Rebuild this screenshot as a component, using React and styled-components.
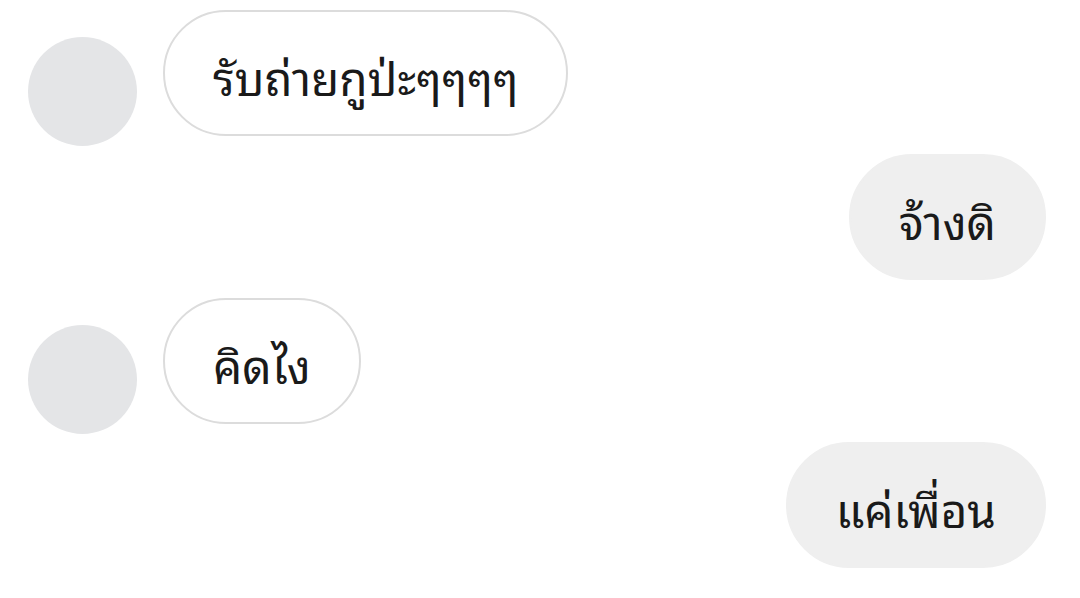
import styled, { createGlobalStyle } from 'styled-components';

const GlobalStyle = createGlobalStyle`
  html, body {
    margin: 0;
    padding: 0;
    background: #fff;
  }
  body {
    font-family: "Noto Sans Thai Looped", "Noto Sans Thai", "Noto Sans", sans-serif;
    color: #1a1a1a;
  }
`;

const messages = [
  { id: 1, from: 'them', text: 'รับถ่ายกูป่ะๆๆๆๆ' },
  { id: 2, from: 'me', text: 'จ้างดิ' },
  { id: 3, from: 'them', text: 'คิดไง' },
  { id: 4, from: 'me', text: 'แค่เพื่อน' },
];

const Thread = styled.main`
  width: 1080px;
  height: 598px;
  box-sizing: border-box;
  padding: 10px 34px 0 28px;
  display: flex;
  flex-direction: column;
  gap: 18px;
  overflow: hidden;
`;

const Row = styled.div`
  display: flex;
  align-items: flex-end;
  justify-content: ${(p) => (p.$mine ? 'flex-end' : 'flex-start')};
`;

const Avatar = styled.div`
  width: 109px;
  height: 109px;
  flex-shrink: 0;
  border-radius: 50%;
  background: #e4e5e7;
  margin-right: 26px;
  margin-bottom: -10px;
`;

const Bubble = styled.div`
  box-sizing: border-box;
  height: 126px;
  display: flex;
  align-items: center;
  padding: 4px 48px 0;
  border-radius: 63px;
  font-size: 46px;
  font-weight: 400;
  line-height: 1;
  white-space: nowrap;
  background: ${(p) => (p.$mine ? '#efefef' : '#fff')};
  border: 2px solid ${(p) => (p.$mine ? '#efefef' : '#dcdcdc')};
`;

export default function App() {
  return (
    <>
      <GlobalStyle />
      <Thread>
        {messages.map((m) => {
          const mine = m.from === 'me';
          return (
            <Row key={m.id} $mine={mine}>
              {!mine && <Avatar />}
              <Bubble $mine={mine}>{m.text}</Bubble>
            </Row>
          );
        })}
      </Thread>
    </>
  );
}
